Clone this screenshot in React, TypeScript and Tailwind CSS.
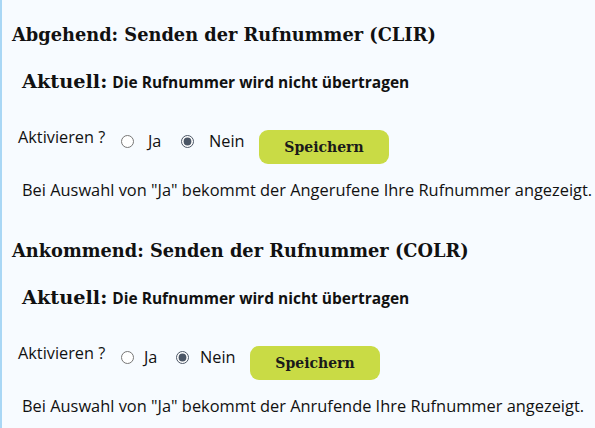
import React, { useState } from 'react';

const slab = { fontFamily: '"DejaVu Serif", serif' };

type SectionProps = {
  title: string;
  name: string;
  hint: string;
  compact?: boolean;
};

const Section: React.FC<SectionProps> = ({ title, name, hint, compact }) => {
  const [value, setValue] = useState<'ja' | 'nein'>('nein');

  return (
    <section>
      <h2 className="text-[17.8px] font-bold leading-[22px] pl-[10px] text-[#111]" style={slab}>{title}</h2>

      <p className="mt-[24px] pl-[20px] flex items-baseline gap-[5px] leading-[24px]">
        <span className="text-[19.3px] font-bold" style={slab}>Aktuell:</span>
        <span className="text-[15.5px] font-bold">Die Rufnummer wird nicht übertragen</span>
      </p>

      <div className="mt-[33px] pl-[16px] flex items-start text-[16.3px] leading-[20px]">
        <span className="w-[103px] shrink-0">Aktivieren ?</span>
        <div className="flex items-center mt-[4px]">
          <label className={`flex items-center ${compact ? 'w-[55px] gap-[10px]' : 'w-[60px] gap-[14px]'}`}>
            <input type="radio" name={name} checked={value === 'ja'} onChange={() => setValue('ja')} className="w-[13px] h-[13px] m-0 accent-gray-600" />
            Ja
          </label>
          <label className={`flex items-center ${compact ? 'w-[74px] gap-[11px]' : 'w-[78px] gap-[15px]'}`}>
            <input type="radio" name={name} checked={value === 'nein'} onChange={() => setValue('nein')} className="w-[13px] h-[13px] m-0 accent-gray-600" />
            Nein
          </label>
        </div>
        <button className="mt-[3px] w-[130px] h-[34px] rounded-[9px] bg-[#c9db45] text-[14px] font-bold text-[#1a1a1a]" style={slab}>
          Speichern
        </button>
      </div>

      <p className="mt-[15px] pl-[20px] text-[16.4px] leading-[22px] whitespace-nowrap">{hint}</p>
    </section>
  );
};

export default function App() {
  return (
    <div
      className="w-[595px] h-[428px] overflow-hidden bg-[#f7fbff] border-l-2 border-[#a9d7f5] text-[#111] pt-[24px]"
      style={{ fontFamily: '"Open Sans", Arial, sans-serif' }}
    >
      <Section
        title="Abgehend: Senden der Rufnummer (CLIR)"
        name="clir"
        hint={'Bei Auswahl von "Ja" bekommt der Angerufene Ihre Rufnummer angezeigt.'}
      />
      <div className="h-[39px]" />
      <Section
        title="Ankommend: Senden der Rufnummer (COLR)"
        name="colr"
        compact
        hint={'Bei Auswahl von "Ja" bekommt der Anrufende Ihre Rufnummer angezeigt.'}
      />
    </div>
  );
}
